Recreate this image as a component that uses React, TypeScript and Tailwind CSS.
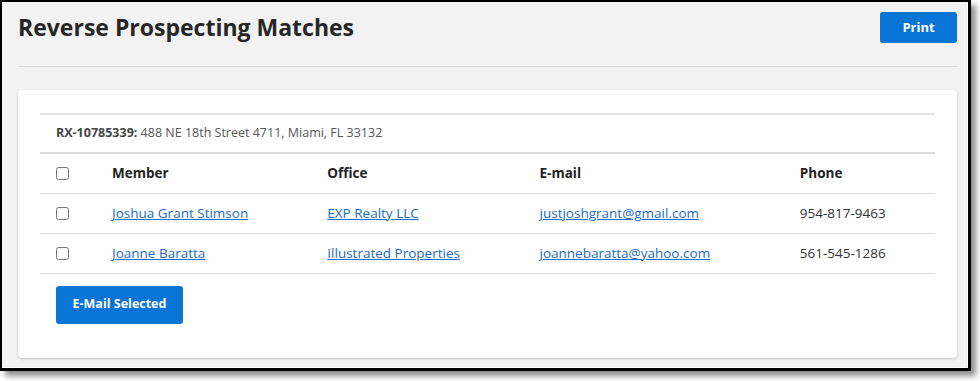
import React from 'react';

const rows = [
  {
    member: 'Joshua Grant Stimson',
    office: 'EXP Realty LLC',
    email: 'justjoshgrant@gmail.com',
    phone: '954-817-9463',
  },
  {
    member: 'Joanne Baratta',
    office: 'Illustrated Properties',
    email: 'joannebaratta@yahoo.com',
    phone: '561-545-1286',
  },
];

function Check() {
  return <input type="checkbox" className="block w-[13px] h-[13px] m-0" />;
}

export default function App() {
  return (
    <div className="w-[980px] h-[381px] bg-white font-['Open_Sans',sans-serif]">
      {/* window frame */}
      <div className="w-[971px] h-[371px] border-t-2 border-l-2 border-r-[3px] border-b-[3px] border-black shadow-[5px_5px_6px_rgba(0,0,0,0.45)]">
        <div className="h-full bg-[#f2f2f2] border-r border-b border-white pl-4 pr-[10px] pt-[10px]">
          {/* Header */}
          <div className="flex items-center justify-between h-[31px]">
            <h1 className="text-[23px] font-bold text-[#262626] leading-none">Reverse Prospecting Matches</h1>
            <button className="w-[77px] h-[31px] bg-[#0b74d7] text-white text-[13px] font-bold rounded-[3px]">
              Print
            </button>
          </div>
          <div className="mt-[23px] border-t border-[#d9d9d9]" />

          {/* Card */}
          <div className="mt-[23px] h-[268px] bg-white rounded-[4px] shadow-[0_1px_3px_rgba(0,0,0,0.18)] px-[22px] pt-[23px]">
            <div className="border-t-2 border-[#e3e3e3] h-[39px] flex items-center pl-4 text-[12.5px] text-[#555]">
              <span className="font-bold text-[#444]">RX-10785339:</span>
              <span>&nbsp;488 NE 18th Street 4711, Miami, FL 33132</span>
            </div>
            <table className="w-full table-fixed border-collapse text-[13.5px]">
              <colgroup>
                <col className="w-[56px]" />
                <col className="w-[215px]" />
                <col className="w-[212px]" />
                <col className="w-[260px]" />
                <col className="w-[151px]" />
              </colgroup>
              <thead>
                <tr className="border-t-2 border-b border-[#dcdcdc] h-[40px] text-left text-[#222]">
                  <th className="pl-4 font-normal"><Check /></th>
                  <th className="pl-4 font-bold">Member</th>
                  <th className="pl-4 font-bold">Office</th>
                  <th className="pl-4 font-bold">E-mail</th>
                  <th className="pl-4 font-bold">Phone</th>
                </tr>
              </thead>
              <tbody>
                {rows.map(r => (
                  <tr key={r.email} className="border-b border-[#dcdcdc] h-[40px]">
                    <td className="pl-4"><Check /></td>
                    <td className="pl-4"><a href="#" className="text-[#1b6ac9] underline">{r.member}</a></td>
                    <td className="pl-4"><a href="#" className="text-[#1b6ac9] underline">{r.office}</a></td>
                    <td className="pl-4"><a href="#" className="text-[#1b6ac9] underline">{r.email}</a></td>
                    <td className="pl-4 text-[#333]">{r.phone}</td>
                  </tr>
                ))}
              </tbody>
            </table>
            <button className="mt-3 ml-4 w-[127px] h-[38px] bg-[#0b74d7] text-white text-[12.5px] font-bold rounded-[3px]">
              E-Mail Selected
            </button>
          </div>
        </div>
      </div>
    </div>
  );
}
